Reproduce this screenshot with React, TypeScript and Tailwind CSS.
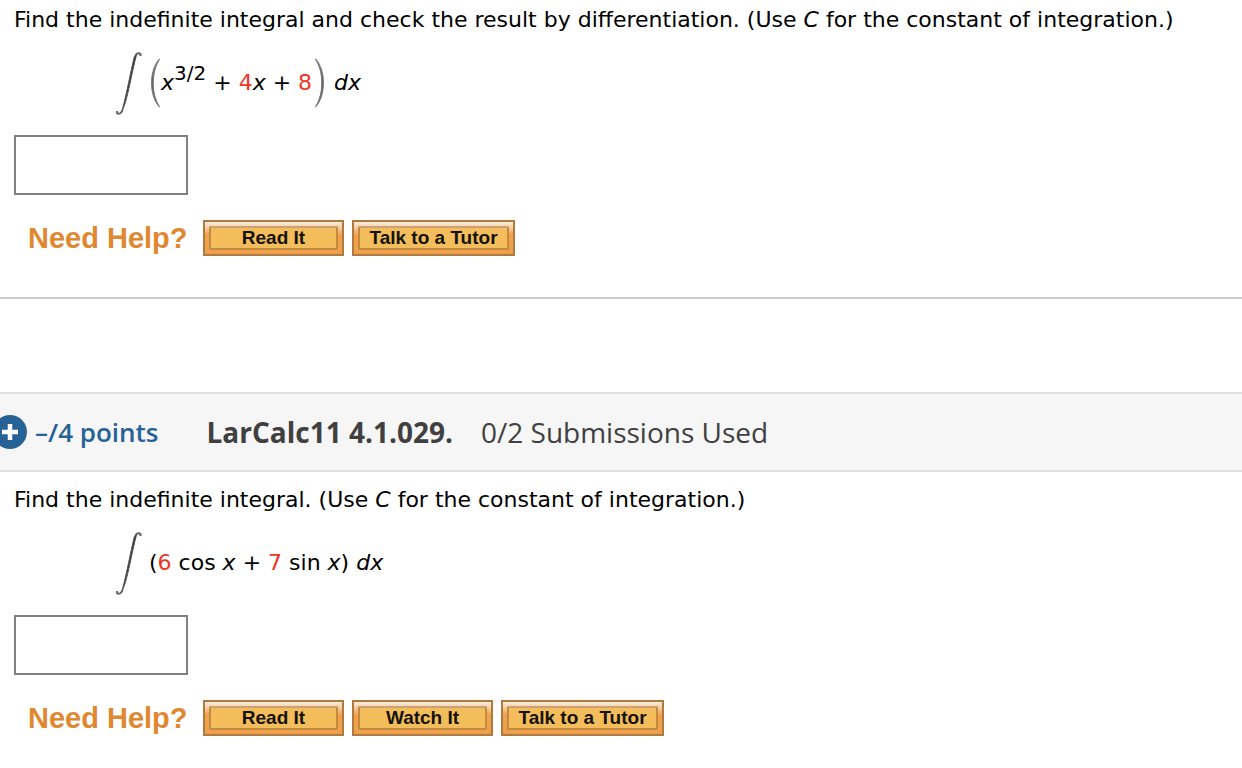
import { useId, type ReactNode } from "react";

function IntegralSign() {
    return (
        <svg className="w-7 h-16 shrink-0" viewBox="0 0 28 64" aria-hidden="true">
            <path d="M25.500 5 V3 C24.500 1.800 21.500 1.500 20.500 5" fill="none" stroke="#666" strokeWidth="2" />
            <path d="M2 60 V62 C3.500 63.500 6.500 62.500 7.500 59" fill="none" stroke="#666" strokeWidth="2" />
            <path d="M19.500 5 C17 14 11 46 7 60 C12 52 17 20 21.500 4 Z" fill="#333" stroke="#555" strokeWidth="1" />
        </svg>
    )
}

function BigParen({ close = false }: { close?: boolean }) {
    return (
        <svg className="w-3 h-[52px] shrink-0" viewBox="0 0 12 52" aria-hidden="true">
            {close
                ? <path d="M1.500 2 C12 14 12 38 1.500 50 C10 37 10 15 1.500 2 Z" fill="#444" stroke="#777" strokeWidth="1.200" />
                : <path d="M10.500 2 C0 14 0 38 10.500 50 C2 37 2 15 10.500 2 Z" fill="#444" stroke="#777" strokeWidth="1.200" />
            }
        </svg>
    )
}

function Coefficient({ children }: { children: ReactNode }) {
    return <span className="text-[#ee3524]">{children}</span>
}

function HelpButton({ label, wide = false }: { label: string, wide?: boolean }) {
    return (
        <button
            type="button"
            className={`${wide ? "w-[163px]" : "w-[141px]"} h-9 p-1 border-2 border-[#ad7a40] bg-linear-to-b from-[#fdeedd] via-[#f0a14b] via-40% to-[#ee9f49] cursor-pointer`}
        >
            <span className="flex h-full items-center justify-center rounded-xs border-2 border-[#c48a42] border-t-[#c9a278] bg-[#f4bd5c] font-['Liberation_Sans',Arial,sans-serif] text-[19px] leading-5 font-bold text-[#15120a] whitespace-nowrap">
                {label}
            </span>
        </button>
    )
}

interface QuestionProps {
    prompt: ReactNode
    integrand: ReactNode
    children: ReactNode
}

function Question({ prompt, integrand, children }: QuestionProps) {
    const id = useId()

    return (
        <section className="px-3.5 pt-2">
            <label htmlFor={id} className="block text-[22px] leading-6">{prompt}</label>

            <div className="flex items-center h-16 mt-[19px] ml-[101px] text-[22px] leading-6 whitespace-nowrap">
                <IntegralSign />
                {integrand}
            </div>

            <input id={id} type="text" className="block w-[174px] h-[60px] mt-5 px-2 border-2 border-[#808080] bg-white" />

            {/* Help */}
            <div className="flex items-center gap-2 mt-[25px]">
                <h2 className="w-[181px] pl-3.5 font-['Liberation_Sans',Arial,sans-serif] text-[29px] leading-9 font-bold text-[#e0882f] whitespace-nowrap">Need Help?</h2>
                {children}
            </div>
        </section>
    )
}

export default function App() {
    return (
        <main className="overflow-hidden bg-white font-[Verdana,'DejaVu_Sans',sans-serif] text-black">
            <Question
                prompt={<>Find the indefinite integral and check the result by differentiation. (Use <i>C</i> for the constant of integration.)</>}
                integrand={
                    <div className="flex items-center ml-1.5">
                        <BigParen />
                        <span className="mr-0.5"><i>x</i><sup className="text-xl leading-none">3/2</sup> + <Coefficient>4</Coefficient><i>x</i> + <Coefficient>8</Coefficient></span>
                        <BigParen close />
                        <i className="ml-2">dx</i>
                    </div>
                }
            >
                <HelpButton label="Read It" />
                <HelpButton label="Talk to a Tutor" wide />
            </Question>

            <hr className="mt-[41px] border-t-2 border-[#cccccc]" />

            {/* Question header */}
            <header className="flex items-center h-20 mt-[93px] border-y-2 border-[#dddddd] bg-[#f6f6f6] font-['Open_Sans','Noto_Sans',sans-serif] text-[28px] leading-9 text-[#404040] whitespace-nowrap">
                <button type="button" aria-label="Expand" className="flex items-center justify-center size-[34px] -ml-[7px] rounded-full bg-[#266295] cursor-pointer">
                    <svg className="size-4" viewBox="0 0 16 16" aria-hidden="true">
                        <path d="M8 0 V16 M0 8 H16" stroke="white" strokeWidth="4.500" />
                    </svg>
                </button>
                <span className="ml-2 text-[26px] font-semibold text-[#266295]">–/4 points</span>
                <strong className="ml-12 font-bold">LarCalc11 4.1.029.</strong>
                <span className="ml-7">0/2 Submissions Used</span>
            </header>

            <div className="pt-2">
                <Question
                    prompt={<>Find the indefinite integral. (Use <i>C</i> for the constant of integration.)</>}
                    integrand={
                        <span className="ml-1.5">(<Coefficient>6</Coefficient> cos <i>x</i> + <Coefficient>7</Coefficient> sin <i>x</i>) <i>dx</i></span>
                    }
                >
                    <HelpButton label="Read It" />
                    <HelpButton label="Watch It" />
                    <HelpButton label="Talk to a Tutor" wide />
                </Question>
            </div>
        </main>
    )
}
